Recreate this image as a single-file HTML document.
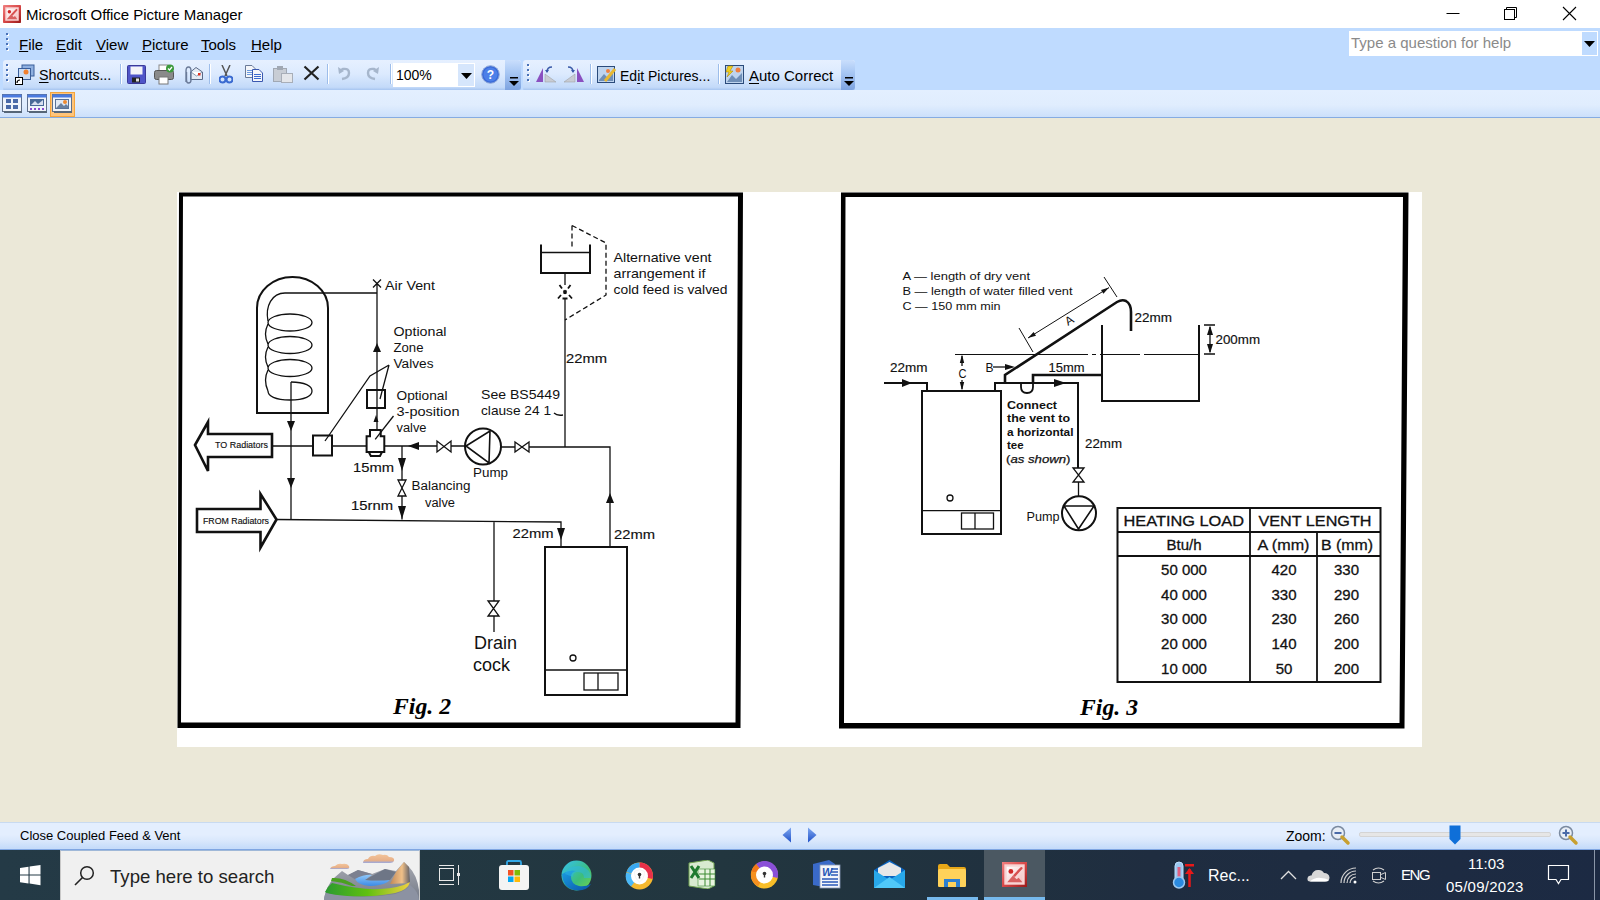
<!DOCTYPE html>
<html><head><meta charset="utf-8">
<style>
*{margin:0;padding:0;box-sizing:border-box}
html,body{width:1600px;height:900px;overflow:hidden;background:#EBE8D8;font-family:"Liberation Sans",sans-serif;position:relative}
.a{position:absolute;white-space:nowrap}
.menu{font-size:15px;color:#000;top:36px}
.menu .u{text-underline-offset:1px}
.u{text-decoration:underline;text-underline-offset:2px}
</style></head>
<body>
<div class="a" style="left:0;top:118px;width:1600px;height:704px;background:#EBE8D8"></div>
<!-- TITLE BAR -->
<div class="a" style="left:0;top:0;width:1600px;height:28px;background:#fff"></div>
<svg class="a" style="left:3px;top:5px" width="18" height="18" viewBox="0 0 24 24">
<defs><linearGradient id="pmo" x1="0" y1="0" x2="1" y2="1"><stop offset="0" stop-color="#F08080"/><stop offset="0.5" stop-color="#D84848"/><stop offset="1" stop-color="#9A1A1A"/></linearGradient>
<linearGradient id="pmi" x1="0" y1="0" x2="1" y2="1"><stop offset="0" stop-color="#FFFFFF"/><stop offset="1" stop-color="#F4C0C0"/></linearGradient></defs>
<rect x="0" y="0" width="24" height="24" rx="1" fill="url(#pmo)"/>
<rect x="3" y="3" width="18" height="18" fill="#F8D4D4"/>
<rect x="5" y="5" width="14" height="14" fill="url(#pmi)"/>
<circle cx="8.5" cy="9" r="2.3" fill="#D02828"/>
<path d="M12 13 L18 6.5" stroke="#D85050" stroke-width="2.6" stroke-linecap="round"/>
<path d="M5 19 L10.5 12.5 L14 16 L16 14.5 L19 19 Z" fill="#D86060"/>
</svg>
<div class="a" style="left:26px;top:6px;font-size:15px;color:#000;letter-spacing:-0.05px">Microsoft Office Picture Manager</div>
<svg class="a" style="left:1440px;top:0" width="160" height="28">
<line x1="6.5" y1="13.5" x2="19.5" y2="13.5" stroke="#000" stroke-width="1"/>
<rect x="64.5" y="9.5" width="10" height="10" fill="none" stroke="#000"/>
<path d="M66.5 9.5 V7.5 H76.5 V17.5 H74.5" fill="none" stroke="#000"/>
<path d="M123 7 L136 20 M136 7 L123 20" stroke="#000" stroke-width="1.1"/>
</svg>
<!-- MENU BAR -->
<div class="a" style="left:0;top:28px;width:1600px;height:31px;background:#BFDBFF"></div>
<svg class="a" style="left:6px;top:33px" width="4" height="20"><g fill="#fff"><rect x="1" y="1" width="2" height="2"/><rect x="1" y="6" width="2" height="2"/><rect x="1" y="11" width="2" height="2"/><rect x="1" y="16" width="2" height="2"/></g><g fill="#4A72B8"><rect x="0" y="0" width="2" height="2"/><rect x="0" y="5" width="2" height="2"/><rect x="0" y="10" width="2" height="2"/><rect x="0" y="15" width="2" height="2"/></g></svg>
<div class="a menu" style="left:19px"><span class="u">F</span>ile</div>
<div class="a menu" style="left:56px"><span class="u">E</span>dit</div>
<div class="a menu" style="left:96px"><span class="u">V</span>iew</div>
<div class="a menu" style="left:142px"><span class="u">P</span>icture</div>
<div class="a menu" style="left:201px"><span class="u">T</span>ools</div>
<div class="a menu" style="left:251px"><span class="u">H</span>elp</div>
<div class="a" style="left:1349px;top:31px;width:249px;height:25px;background:#fff;border:1px solid #fff"></div>
<div class="a" style="left:1582px;top:32px;width:15px;height:23px;background:#BFDBFF"></div>
<svg class="a" style="left:1583px;top:40px" width="13" height="8"><path d="M1 1 H12 L6.5 7 Z" fill="#000"/></svg>
<div class="a" style="left:1351px;top:34px;font-size:15px;color:#8A8A8A">Type a question for help</div>
<!-- TOOLBAR ROW -->
<div class="a" style="left:0;top:59px;width:1600px;height:31px;background:#BFDBFF"></div>
<div class="a" style="left:3px;top:60px;width:518px;height:31px;border-radius:3px;background:linear-gradient(#E6F0FF 0,#DCEAFE 45%,#C3DAF9 88%,#A9C7F1 96%,#8FB2E8 100%)"></div>
<div class="a" style="left:505px;top:60px;width:16px;height:30px;border-radius:0 3px 3px 0;background:linear-gradient(#C9DEFC 0,#A9C8F4 40%,#7DA3E0 100%)"></div>
<div class="a" style="left:523px;top:60px;width:332px;height:31px;border-radius:3px;background:linear-gradient(#E6F0FF 0,#DCEAFE 45%,#C3DAF9 88%,#A9C7F1 96%,#8FB2E8 100%)"></div>
<div class="a" style="left:841px;top:60px;width:14px;height:30px;border-radius:0 3px 3px 0;background:linear-gradient(#C9DEFC 0,#A9C8F4 40%,#7DA3E0 100%)"></div>
<svg class="a" style="left:507px;top:77px" width="14" height="12"><rect x="3" y="0" width="8" height="1.5" fill="#000"/><path d="M2 4 H12 L7 9 Z" fill="#000"/></svg>
<svg class="a" style="left:842px;top:77px" width="14" height="12"><rect x="3" y="0" width="8" height="1.5" fill="#000"/><path d="M2 4 H12 L7 9 Z" fill="#000"/></svg>
<svg class="a" style="left:6px;top:64px" width="4" height="20"><g fill="#fff"><rect x="1" y="1" width="2" height="2"/><rect x="1" y="6" width="2" height="2"/><rect x="1" y="11" width="2" height="2"/><rect x="1" y="16" width="2" height="2"/></g><g fill="#4A72B8"><rect x="0" y="0" width="2" height="2"/><rect x="0" y="5" width="2" height="2"/><rect x="0" y="10" width="2" height="2"/><rect x="0" y="15" width="2" height="2"/></g></svg>
<svg class="a" style="left:527px;top:64px" width="4" height="20"><g fill="#fff"><rect x="1" y="1" width="2" height="2"/><rect x="1" y="6" width="2" height="2"/><rect x="1" y="11" width="2" height="2"/><rect x="1" y="16" width="2" height="2"/></g><g fill="#4A72B8"><rect x="0" y="0" width="2" height="2"/><rect x="0" y="5" width="2" height="2"/><rect x="0" y="10" width="2" height="2"/><rect x="0" y="15" width="2" height="2"/></g></svg>
<!-- separators -->
<div class="a" style="left:120px;top:64px;width:1px;height:20px;background:#9DBDEA;box-shadow:1px 0 0 #fff"></div>
<div class="a" style="left:209px;top:64px;width:1px;height:20px;background:#9DBDEA;box-shadow:1px 0 0 #fff"></div>
<div class="a" style="left:327px;top:64px;width:1px;height:20px;background:#9DBDEA;box-shadow:1px 0 0 #fff"></div>
<div class="a" style="left:390px;top:64px;width:1px;height:20px;background:#9DBDEA;box-shadow:1px 0 0 #fff"></div>
<div class="a" style="left:590px;top:64px;width:1px;height:20px;background:#9DBDEA;box-shadow:1px 0 0 #fff"></div>
<div class="a" style="left:718px;top:64px;width:1px;height:20px;background:#9DBDEA;box-shadow:1px 0 0 #fff"></div>
<!-- shortcuts icon -->
<svg class="a" style="left:15px;top:64px" width="21" height="21">
<rect x="7" y="1" width="12" height="11" fill="#8FB0E0" stroke="#3A5E9A"/>
<rect x="3.5" y="4.5" width="12" height="11" fill="#C9DCF5" stroke="#3A5E9A"/>
<circle cx="11" cy="8" r="2.5" fill="#F08030"/>
<rect x="0.5" y="13.5" width="7" height="7" fill="#fff" stroke="#000"/>
<path d="M2 19 Q2 16 5 16" stroke="#000" fill="none" stroke-width="1.2"/>
</svg>
<div class="a" style="left:39px;top:67px;font-size:14.3px;color:#000"><span class="u">S</span>hortcuts...</div>
<!-- save -->
<svg class="a" style="left:127px;top:65px" width="19" height="19"><rect x="0.5" y="0.5" width="18" height="18" rx="1" fill="#4F55C8" stroke="#3A3A9A"/><rect x="3.5" y="1.5" width="12" height="8" fill="#F4F4F8"/><rect x="5" y="12.5" width="8" height="5" fill="#222"/><rect x="9" y="13.5" width="3" height="3" fill="#ddd"/></svg>
<!-- print -->
<svg class="a" style="left:154px;top:64px" width="21" height="21"><rect x="5" y="1" width="9" height="6" fill="#fff" stroke="#888"/><rect x="0.5" y="6.5" width="19" height="9" rx="2" fill="#8A8A8A" stroke="#555"/><rect x="5" y="13" width="9" height="7" fill="#fff" stroke="#777"/><circle cx="16" cy="4.5" r="4" fill="#3C9A3C"/><path d="M14 4.5 L15.5 6 L18 3" stroke="#fff" fill="none" stroke-width="1.2"/></svg>
<!-- attach -->
<svg class="a" style="left:183px;top:64px" width="21" height="21"><path d="M7.5 8 L13 3.5 L19.5 8 V15.5 H7.5 Z" fill="#E4EAF4" stroke="#5A6A88"/><path d="M8 8 L13.5 12 L19 8" fill="#fff" stroke="#8A9AB0"/><rect x="15" y="9" width="2.5" height="2.5" fill="#E03020"/><path d="M3 18 V7 Q3 3 5.5 3 Q8 3 8 7 V16 Q8 19 5.5 19 Q3.5 19 3.5 16 V8" stroke="#6A7A98" stroke-width="1.4" fill="none"/></svg>
<!-- cut -->
<svg class="a" style="left:219px;top:65px" width="14" height="19"><path d="M3 0 L8 11 M11 0 L6 11" stroke="#555" stroke-width="1.5"/><circle cx="3.5" cy="14.5" r="3" fill="none" stroke="#3A6AD0" stroke-width="2"/><circle cx="10.5" cy="14.5" r="3" fill="none" stroke="#3A6AD0" stroke-width="2"/></svg>
<!-- copy -->
<svg class="a" style="left:245px;top:65px" width="19" height="17"><path d="M0.5 0.5 H7 L10.5 4 V12.5 H0.5 Z" fill="#F4F6FA" stroke="#6A7A98"/><path d="M2 5.5 H9 M2 7.5 H9 M2 9.5 H9" stroke="#6A9AE0"/><path d="M7.5 4.5 H14 L17.5 8 V16.5 H7.5 Z" fill="#F4F6FA" stroke="#3A58B0"/><path d="M9 9.5 H16 M9 11.5 H16 M9 13.5 H16" stroke="#3A6AD0"/></svg>
<!-- paste grey -->
<svg class="a" style="left:273px;top:65px" width="20" height="18"><rect x="0.5" y="3.5" width="13" height="13" fill="#C8CDD5" stroke="#A0A8B4"/><rect x="4" y="1" width="6" height="4" fill="#A0A8B4"/><rect x="8.5" y="8.5" width="11" height="9" fill="#E4E6EA" stroke="#A8AEB8"/></svg>
<!-- delete X -->
<svg class="a" style="left:303px;top:65px" width="17" height="16"><path d="M1.5 1.5 L15.5 14.5 M15.5 1.5 L1.5 14.5" stroke="#222" stroke-width="2.2"/></svg>
<!-- undo redo grey -->
<svg class="a" style="left:337px;top:66px" width="16" height="15"><path d="M5 13 Q12 12 12 7 Q12 2 6 3 L4 4" stroke="#A6B6CC" stroke-width="2.4" fill="none"/><path d="M1 1 L2 8 L7 5 Z" fill="#A6B6CC"/></svg>
<svg class="a" style="left:364px;top:66px" width="16" height="15"><path d="M11 13 Q4 12 4 7 Q4 2 10 3 L12 4" stroke="#A6B6CC" stroke-width="2.4" fill="none"/><path d="M15 1 L14 8 L9 5 Z" fill="#A6B6CC"/></svg>
<!-- zoom combo -->
<div class="a" style="left:393px;top:63px;width:82px;height:24px;background:#fff"></div>
<div class="a" style="left:458px;top:64px;width:16px;height:22px;background:#D6E6FC"></div>
<svg class="a" style="left:460px;top:72px" width="13" height="8"><path d="M1 1 H12 L6.5 7 Z" fill="#000"/></svg>
<div class="a" style="left:396px;top:67px;font-size:14px;color:#000">100%</div>
<svg class="a" style="left:481px;top:65px" width="19" height="19"><circle cx="9.5" cy="9.5" r="8.8" fill="#3A6AD8" stroke="#8FA8D8"/><circle cx="9.5" cy="9.5" r="7" fill="#4D80E8"/><text x="9.5" y="14" font-size="12" font-weight="bold" text-anchor="middle" fill="#fff" font-family="Liberation Sans">?</text></svg>
<!-- rotate -->
<svg class="a" style="left:535px;top:65px" width="22" height="18"><path d="M1 17 L8 3 V17 Z" fill="#8A50C0"/><path d="M10 17 H21 L10 9 Z" fill="#C8CCD4" stroke="#999" stroke-width="0.5"/><path d="M12 7 Q12 2 17 2" stroke="#3A5AA8" stroke-width="1.5" fill="none"/><path d="M10 5 L12 8 L14 5Z" fill="#3A5AA8"/></svg>
<svg class="a" style="left:563px;top:65px" width="22" height="18"><path d="M21 17 L14 3 V17 Z" fill="#8A50C0"/><path d="M12 17 H1 L12 9 Z" fill="#C8CCD4" stroke="#999" stroke-width="0.5"/><path d="M10 7 Q10 2 5 2" stroke="#3A5AA8" stroke-width="1.5" fill="none"/><path d="M8 5 L10 8 L12 5Z" fill="#3A5AA8"/></svg>
<!-- edit pictures icon -->
<svg class="a" style="left:597px;top:65px" width="20" height="19"><rect x="0.5" y="1.5" width="17" height="16" fill="#BFD4EE" stroke="#2A4A7A"/><path d="M2 15 L7 9 L11 13 L16 8 V16 H2Z" fill="#6F8FB8"/><circle cx="11" cy="6" r="2" fill="#F08040"/><path d="M8 16 L18 4" stroke="#E8B830" stroke-width="3"/></svg>
<div class="a" style="left:620px;top:68px;font-size:14px;color:#000">Ed<span class="u">i</span>t Pictures...</div>
<!-- auto correct icon -->
<svg class="a" style="left:725px;top:65px" width="19" height="19"><rect x="0.5" y="0.5" width="18" height="18" fill="#BFD4EE" stroke="#2A4A7A"/><path d="M2 17 L7 10 L11 14 L17 8 V17 H2Z" fill="#6F8FB8"/><circle cx="13" cy="5" r="2.5" fill="#F08040"/><path d="M3 1 L8 1 L5 6 L8 6 L2 12 L4 7 L1 7 Z" fill="#F0D020" stroke="#A88000" stroke-width="0.5"/></svg>
<div class="a" style="left:749px;top:67px;font-size:15px;color:#000"><span class="u">A</span>uto Correct</div>
<!-- ROW 3 -->
<div class="a" style="left:0;top:90px;width:1600px;height:28px;background:linear-gradient(#E3EFFF 0,#E0EDFE 55%,#CCE0FB 100%);border-bottom:1px solid #86ACE2"></div>
<div class="a" style="left:50px;top:92px;width:25px;height:25px;background:#FFC47A;border:1px solid #F5A53C"></div>
<svg class="a" style="left:2px;top:94px" width="21" height="19"><rect x="0.5" y="0.5" width="19" height="17" fill="#F0F4FA" stroke="#60708A"/><rect x="0.5" y="0.5" width="19" height="3" fill="#4A7AE0"/><rect x="2" y="17" width="18" height="2" fill="#566678"/><rect x="4" y="5" width="5" height="4" fill="#4A6AA8"/><rect x="11" y="5" width="5" height="4" fill="#4A6AA8"/><rect x="4" y="11" width="5" height="4" fill="#4A6AA8"/><rect x="11" y="11" width="5" height="4" fill="#4A6AA8"/></svg>
<svg class="a" style="left:27px;top:94px" width="21" height="19"><rect x="0.5" y="0.5" width="19" height="17" fill="#F0F4FA" stroke="#60708A"/><rect x="0.5" y="0.5" width="19" height="3" fill="#4A7AE0"/><rect x="2" y="17" width="18" height="2" fill="#566678"/><rect x="3" y="5" width="14" height="7" fill="#4A6A98"/><path d="M4 11 L8 7 L11 10 L16 6 V11Z" fill="#D8E0F0"/><g fill="#8A4AD0"><rect x="3" y="14" width="2" height="2"/><rect x="7" y="14" width="2" height="2"/><rect x="11" y="14" width="2" height="2"/><rect x="15" y="14" width="2" height="2"/></g></svg>
<svg class="a" style="left:52px;top:94px" width="21" height="19"><rect x="0.5" y="0.5" width="19" height="17" fill="#F0F4FA" stroke="#60708A"/><rect x="0.5" y="0.5" width="19" height="3" fill="#4A7AE0"/><rect x="2" y="17" width="18" height="2" fill="#566678"/><rect x="3" y="5" width="14" height="10" fill="#5A7298"/><rect x="4" y="6" width="12" height="8" fill="#E0E8F4"/><path d="M4 14 L9 9 L12 12 L14 10 L16 12 V14Z" fill="#6A80A0"/><circle cx="13" cy="8" r="2" fill="#F08A30"/></svg>
<!-- STATUS BAR -->
<div class="a" style="left:0;top:822px;width:1600px;height:28px;background:linear-gradient(#E3EEFE 0,#E3EEFE 45%,#D8E7FC 70%,#C6DCFA 95%);border-top:1px solid #C8DAF0;border-bottom:1px solid #7FA6E2"></div>
<div class="a" style="left:20px;top:828px;font-size:13px;color:#000">Close Coupled Feed &amp; Vent</div>
<svg class="a" style="left:782px;top:827px" width="36" height="16"><defs><linearGradient id="arg" x1="0" y1="0" x2="0" y2="1"><stop offset="0" stop-color="#7FA8F0"/><stop offset="1" stop-color="#1F50C8"/></linearGradient></defs><path d="M9 0.5 V15.5 L0.5 8 Z" fill="url(#arg)"/><path d="M26 0.5 V15.5 L34.5 8 Z" fill="url(#arg)"/></svg>
<div class="a" style="left:1286px;top:828px;font-size:14px;color:#000">Zoom:</div>
<svg class="a" style="left:1330px;top:825px" width="21" height="21"><circle cx="8" cy="8" r="6.5" fill="#E8EEF6" stroke="#7A8AA0" stroke-width="1.5"/><rect x="4.5" y="7" width="7" height="2" fill="#4A6AA8"/><path d="M12 12 L18 18" stroke="#C8A030" stroke-width="3.5" stroke-linecap="round"/></svg>
<div class="a" style="left:1359px;top:832px;width:192px;height:5px;background:#E6E6E6;border:1px solid #D4D4D4;border-radius:2px"></div>
<svg class="a" style="left:1449px;top:825px" width="12" height="20"><path d="M0.5 0.5 H11.5 V14 L6 19.5 L0.5 14 Z" fill="#0F6FD8"/></svg>
<svg class="a" style="left:1558px;top:825px" width="21" height="21"><circle cx="8" cy="8" r="6.5" fill="#E8EEF6" stroke="#7A8AA0" stroke-width="1.5"/><rect x="4.5" y="7" width="7" height="2" fill="#4A6AA8"/><rect x="7" y="4.5" width="2" height="7" fill="#4A6AA8"/><path d="M12 12 L18 18" stroke="#C8A030" stroke-width="3.5" stroke-linecap="round"/></svg>
<!-- IMAGE AREA -->
<div class="a" style="left:177px;top:192px;width:1245px;height:555px;background:#fff"></div>
<svg class="a" style="left:0;top:0" width="1600" height="900" viewBox="0 0 1600 900">
<g fill="#000" fill-rule="evenodd">
<path d="M179 192.5 L743 192.5 L740.5 728 L177.5 728 Z M183 196.5 L738 196.5 L735.5 722.5 L181 722.5 Z"/>
<path d="M841 192.5 L1408.5 192.5 L1404.5 728.5 L839 728.5 Z M845.5 197 L1403 197 L1399.5 723 L844 723 Z"/>
</g>
<g fill="none" stroke="#111" stroke-width="1.3" stroke-linecap="butt" stroke-linejoin="miter">
<!-- ============ FIG 2 ============ -->
<!-- cylinder -->
<path d="M257 413 L257 308 A35.5 31 0 0 1 328 308 L328 413 Z" stroke-width="2"/>
<!-- coil -->
<path d="M377 293 H285 C272 293 265 306 268 321"/>
<ellipse cx="290" cy="322.5" rx="22" ry="8.5"/>
<ellipse cx="290" cy="345" rx="22" ry="8.5"/>
<ellipse cx="290" cy="368" rx="22" ry="8.5"/>
<path d="M268 324 Q263 334 268 344 M268 347 Q263 357 268 367 M268 370 Q263 380 268 391"/>
<path d="M291 382 C305 382 312 386 312 391 C312 396 305 400 290 400 C275 400 268 396 268 391"/>
<path d="M291 382 V519.5"/>
<!-- air vent pipe -->
<path d="M377 283.5 V430 M373 279.5 L381 287.5 M381 279.5 L373 287.5"/>
<rect x="367" y="390" width="18" height="18" stroke-width="2"/>
<!-- leaders -->
<path d="M389 365 L380 399 M389 365 L370 376 L325 441"/>
<path d="M393.5 416 L375.2 439.3"/>
<!-- left box -->
<rect x="313" y="435.5" width="19" height="20" stroke-width="2"/>
<!-- main horizontal -->
<path d="M272 446 H313 M332 446 H366 M385 446 H437 M451 446 H465"/>
<!-- 3 position valve -->
<path d="M370 436.3 V430 H380.7 V436.3 H384.3 V452 H366.6 V436.3 Z M368.8 452 L370.8 456 H380 L382 452" stroke-width="2"/>
<!-- junction down -->
<path d="M402 446 V480 M402 496 V519.5"/>
<path d="M398 480 H406 L398 496 H406 Z"/>
<path d="M437 441 V452 L451 441 V452 Z"/>
<!-- pump -->
<circle cx="483" cy="446.5" r="18" stroke-width="2"/>
<path d="M466 446 L490 431 L489 463 Z" stroke-width="1.6"/>
<path d="M501 447 H515 M529 447 H610 V547"/>
<path d="M515 442 V452 L529 442 V452 Z"/>
<!-- cold feed -->
<path d="M565 273 V285 M565 298.5 V447"/>
<path d="M541 244.5 V273 H590 V244.5" stroke-width="2"/>
<path d="M541 252.5 H590"/>
<path d="M559.5 285 L562 288.5 M570.5 285 L568 288.5 M563.5 290.5 L566.5 293.5 M566.5 290.5 L563.5 293.5 M558 298.5 L561 295 M572 298.5 L569 295 M562.5 298.5 H567.5" stroke-width="1.8"/>
<path d="M572 225.5 V248 M572 225.5 L606 243 V295 L565 320" stroke-dasharray="5 3"/>
<path d="M554 413 Q557 416 563 415"/>
<!-- lower line -->
<path d="M276 519.5 L561 522 V547 M494 522 V601 M494 616 V632"/>
<path d="M488 601 H499 L488 616 H499 Z"/>
<!-- boiler -->
<rect x="545" y="547" width="82" height="148" stroke-width="2"/>
<path d="M545 670 H627"/>
<circle cx="573" cy="658" r="3"/>
<rect x="584" y="673" width="34" height="17"/>
<path d="M598 673 V690"/>
<!-- radiator arrows -->
<path d="M195 445 L208 422 V434 H272 V457 H208 V471 Z" stroke-width="2.6"/>
<path d="M197 509 H260.5 V494 L276.5 519.5 L260.5 547.5 V532 H197 Z" stroke-width="2.6"/>
<!-- ============ FIG 3 ============ -->
<rect x="922" y="391" width="79" height="143" stroke-width="2"/>
<path d="M922 510.7 H1001"/>
<circle cx="950" cy="498" r="3"/>
<rect x="961.5" y="513" width="32" height="16"/>
<path d="M975 513 V529"/>
<path d="M884 383 H927 V391" stroke-width="2"/>
<path d="M962 356 V366 M962 380 V389"/>
<path d="M955 354.5 H1088 M1092 354.5 H1096 M1100 354.5 H1140 M1144 354.5 H1199" stroke-width="1.1"/>
<path d="M995 391 V383 H1078 V468" stroke-width="2"/>
<path d="M1005 383 V375 L1117 302 Q1122 299 1126 301 Q1131 304 1131 312 V331" stroke-width="2.6"/>
<path d="M1021 383 V387 Q1021 393 1027 393 Q1033 393 1033 387 V383" stroke-width="1.8"/>
<path d="M1033 383 V375 H1102" stroke-width="2.6"/>
<path d="M993 367 H1008"/>
<path d="M1028 338 L1109 287.6 M1019 328 L1033 352 M1104 277 L1117 297" stroke-width="1"/>
<path d="M1102 325 V401 H1199 V325" stroke-width="2"/>
<path d="M1210 327 V352 M1204 325 H1215 M1204 354 H1215"/>
<path d="M1078.5 482 V496"/>
<path d="M1073 468 H1084 L1073 482 H1084 Z"/>
<circle cx="1079" cy="513.3" r="17" stroke-width="2"/>
<path d="M1064 506 H1094 L1078.5 529 Z" stroke-width="1.6"/>
<!-- table -->
<rect x="1117.5" y="508" width="263" height="174" stroke-width="2"/>
<path d="M1117.5 532 H1380.5 M1117.5 556 H1380.5 M1250 508 V682 M1317 532 V682" stroke-width="1.8"/>
</g>
<!-- filled arrowheads -->
<g fill="#111">
<path d="M287 421 H295 L291 431 Z M287 478 H295 L291 488 Z"/>
<path d="M373 352 H381 L377 343 Z"/>
<path d="M373.5 422 H378.5 L376 415 Z"/>
<path d="M419 442 V450 L408 446 Z"/>
<path d="M398 458 H406 L402 471 Z M398 506 H406 L402 519 Z"/>
<path d="M606 503 H614 L610 493 Z"/>
<path d="M557 528 H565 L561 540 Z"/>
<path d="M902 379 L912 383 L902 387 Z"/>
<path d="M1054 379 L1066 383 L1054 387 Z"/>
<path d="M959.8 363 H964.2 L962 354.5 Z M959.8 382 H964.2 L962 390.5 Z"/>
<path d="M1005 364 L1015 367 L1005 370 Z"/>
<path d="M1028 338 L1036 335.7 L1033.6 331.9 Z M1109 287.6 L1103.4 293.7 L1101 289.9 Z"/>
<path d="M1207 335 H1213 L1210 325.5 Z M1207 344 H1213 L1210 353.5 Z"/>
</g>
<!-- texts -->
<g font-family="Liberation Sans" fill="#111" font-size="12.5">
<text x="385" y="290" textLength="50" lengthAdjust="spacingAndGlyphs">Air Vent</text>
<text x="393.5" y="336" textLength="53" lengthAdjust="spacingAndGlyphs">Optional</text>
<text x="393.5" y="352" textLength="30" lengthAdjust="spacingAndGlyphs">Zone</text>
<text x="393.5" y="368" textLength="40" lengthAdjust="spacingAndGlyphs">Valves</text>
<text x="396.5" y="400" textLength="51" lengthAdjust="spacingAndGlyphs">Optional</text>
<text x="396.5" y="416" textLength="63" lengthAdjust="spacingAndGlyphs">3-position</text>
<text x="396.5" y="431.5" textLength="30" lengthAdjust="spacingAndGlyphs">valve</text>
<text stroke="#111" stroke-width="0.15" x="353" y="472" font-size="13" textLength="41" lengthAdjust="spacingAndGlyphs">15mm</text>
<text stroke="#111" stroke-width="0.15" x="351" y="510" font-size="13" textLength="42" lengthAdjust="spacingAndGlyphs">15rnm</text>
<text x="411.5" y="490" textLength="59" lengthAdjust="spacingAndGlyphs">Balancing</text>
<text x="425" y="507" textLength="30" lengthAdjust="spacingAndGlyphs">valve</text>
<text x="473" y="477" font-size="12" textLength="35" lengthAdjust="spacingAndGlyphs">Pump</text>
<text x="481" y="399" font-size="13" textLength="79" lengthAdjust="spacingAndGlyphs">See BS5449</text>
<text x="481" y="415" font-size="13" textLength="70" lengthAdjust="spacingAndGlyphs">clause 24 1</text>
<text stroke="#111" stroke-width="0.15" x="566" y="363" font-size="13" textLength="41" lengthAdjust="spacingAndGlyphs">22mm</text>
<text stroke="#111" stroke-width="0.15" x="512.5" y="538" font-size="13" textLength="41" lengthAdjust="spacingAndGlyphs">22mm</text>
<text stroke="#111" stroke-width="0.15" x="614" y="539" font-size="13" textLength="41" lengthAdjust="spacingAndGlyphs">22mm</text>
<text x="613.5" y="262" font-size="13" textLength="98" lengthAdjust="spacingAndGlyphs">Alternative vent</text>
<text x="613.5" y="278" font-size="13" textLength="92" lengthAdjust="spacingAndGlyphs">arrangement if</text>
<text x="613.5" y="294" font-size="13" textLength="114" lengthAdjust="spacingAndGlyphs">cold feed is valved</text>
<text x="474" y="649" font-size="17.5" textLength="43" lengthAdjust="spacingAndGlyphs">Drain</text>
<text x="473" y="671" font-size="17.5" textLength="37" lengthAdjust="spacingAndGlyphs">cock</text>
<text stroke="#111" stroke-width="0.15" x="215" y="448" font-size="9.5" textLength="53" lengthAdjust="spacingAndGlyphs">TO Radiators</text>
<text stroke="#111" stroke-width="0.15" x="203" y="524" font-size="8.8" textLength="66" lengthAdjust="spacingAndGlyphs">FROM Radiators</text>
<!-- fig 3 -->
<text x="902.5" y="279.5" font-size="11" textLength="127.5" lengthAdjust="spacingAndGlyphs">A — length of dry vent</text>
<text x="902.5" y="295" font-size="11" textLength="170" lengthAdjust="spacingAndGlyphs">B — length of water filled vent</text>
<text x="902.5" y="310" font-size="11" textLength="98" lengthAdjust="spacingAndGlyphs">C — 150 mm min</text>
<text stroke="#111" stroke-width="0.15" x="890" y="371.5" textLength="37.5" lengthAdjust="spacingAndGlyphs">22mm</text>
<text x="958.5" y="378" font-size="13" textLength="8" lengthAdjust="spacingAndGlyphs">C</text>
<text x="985.5" y="371.5" font-size="12">B</text>
<text stroke="#111" stroke-width="0.15" x="1048.5" y="371.5" textLength="36" lengthAdjust="spacingAndGlyphs">15mm</text>
<text stroke="#111" stroke-width="0.15" x="1134.5" y="321.5" textLength="37.5" lengthAdjust="spacingAndGlyphs">22mm</text>
<text stroke="#111" stroke-width="0.15" x="1215.5" y="343.5" textLength="44.5" lengthAdjust="spacingAndGlyphs">200mm</text>
<text stroke="#111" stroke-width="0.15" x="1085" y="447.5" textLength="37" lengthAdjust="spacingAndGlyphs">22mm</text>
<text x="1026.5" y="520.5" font-size="12" textLength="33" lengthAdjust="spacingAndGlyphs">Pump</text>
<text font-size="12" transform="translate(1068 326) rotate(-32)">A</text>
<g font-weight="bold" font-size="11.5" stroke="none">
<text x="1007" y="408.5" textLength="50" lengthAdjust="spacingAndGlyphs">Connect</text>
<text x="1007" y="422" textLength="63" lengthAdjust="spacingAndGlyphs">the vent to</text>
<text x="1007" y="435.5" textLength="66.5" lengthAdjust="spacingAndGlyphs">a horizontal</text>
<text x="1007" y="449">tee</text>
<text x="1006" y="462.5" font-weight="normal" stroke="#111" stroke-width="0.25" textLength="64.5" lengthAdjust="spacingAndGlyphs">(<tspan font-style="italic">as shown</tspan>)</text>
</g>
<g font-size="15" stroke="#111" stroke-width="0.3">
<text x="1123.5" y="525.5" textLength="120.5" lengthAdjust="spacingAndGlyphs">HEATING LOAD</text>
<text x="1258.5" y="525.5" textLength="113" lengthAdjust="spacingAndGlyphs">VENT LENGTH</text>
<text x="1184" y="550" text-anchor="middle">Btu/h</text>
<text x="1257.5" y="550" textLength="52" lengthAdjust="spacingAndGlyphs">A (mm)</text>
<text x="1321" y="550" textLength="52" lengthAdjust="spacingAndGlyphs">B (mm)</text>
<g text-anchor="middle">
<text x="1184" y="575">50 000</text><text x="1284" y="575">420</text><text x="1346.5" y="575">330</text>
<text x="1184" y="599.5">40 000</text><text x="1284" y="599.5">330</text><text x="1346.5" y="599.5">290</text>
<text x="1184" y="624">30 000</text><text x="1284" y="624">230</text><text x="1346.5" y="624">260</text>
<text x="1184" y="649">20 000</text><text x="1284" y="649">140</text><text x="1346.5" y="649">200</text>
<text x="1184" y="673.5">10 000</text><text x="1284" y="673.5">50</text><text x="1346.5" y="673.5">200</text>
</g>
</g>
</g>
<g font-family="Liberation Serif" font-weight="bold" font-style="italic" fill="#000">
<text x="393" y="714" font-size="24" textLength="58" lengthAdjust="spacingAndGlyphs">Fig. 2</text>
<text x="1080" y="715" font-size="23" textLength="58" lengthAdjust="spacingAndGlyphs">Fig. 3</text>
</g>
</svg>
<!-- TASKBAR -->
<div class="a" style="left:0;top:850px;width:1600px;height:50px;background:linear-gradient(90deg,#243A46 0,#22363F 45%,#20313F 62%,#1F2D40 72%,#1C2A43 100%)"></div>
<svg class="a" style="left:20px;top:865px" width="21" height="21"><path d="M0 3 L8.5 1.8 V9.6 H0 Z M9.6 1.6 L20.5 0 V9.6 H9.6 Z M0 10.6 H8.5 V18.4 L0 17.3 Z M9.6 10.6 H20.5 V20.2 L9.6 18.6 Z" fill="#fff"/></svg>
<div class="a" style="left:60px;top:850px;width:360px;height:50px;background:#F0F0F0;border-left:1px solid #C8C8C8;border-right:1px solid #C8C8C8;border-top:1px solid #9FB8D8"></div>
<svg class="a" style="left:74px;top:865px" width="22" height="21"><circle cx="13" cy="8" r="6.3" fill="none" stroke="#222" stroke-width="1.5"/><path d="M8.5 12.5 L1 20" stroke="#222" stroke-width="1.6"/></svg>
<div class="a" style="left:110px;top:866px;font-size:18.6px;color:#222">Type here to search</div>
<!-- landscape -->
<svg class="a" style="left:320px;top:850px" width="99" height="50" viewBox="0 0 99 50">
<defs>
<linearGradient id="cl" x1="0" y1="0" x2="0" y2="1"><stop offset="0" stop-color="#F2C49A"/><stop offset="0.7" stop-color="#E8B088"/><stop offset="1" stop-color="#98A8E0"/></linearGradient>
<linearGradient id="gb" x1="0" y1="0" x2="0" y2="1"><stop offset="0" stop-color="#A8AAB2"/><stop offset="1" stop-color="#747A88"/></linearGradient>
<linearGradient id="rk" x1="0" y1="0" x2="1" y2="0"><stop offset="0" stop-color="#C08858"/><stop offset="0.6" stop-color="#F0C088"/><stop offset="1" stop-color="#606068"/></linearGradient>
<linearGradient id="gr" x1="0" y1="0" x2="1" y2="0"><stop offset="0" stop-color="#2A9A30"/><stop offset="0.5" stop-color="#60C010"/><stop offset="1" stop-color="#F0D040"/></linearGradient>
<linearGradient id="lk" x1="0" y1="0" x2="0" y2="1"><stop offset="0" stop-color="#90C8F8"/><stop offset="1" stop-color="#3A8AE8"/></linearGradient>
</defs>
<path d="M43 13 Q43 9 48 9 Q50 5 55 6 Q58 3 63 5 Q67 4 69 7 Q75 7 74 11 Q73 13 70 13 Z" fill="url(#cl)"/>
<path d="M10 19 Q11 16 15 16 Q18 13 22 14 Q27 13 29 16 Q30 19 27 19 Z" fill="url(#cl)"/>
<path d="M4 50 Q6 36 14 28 L22 21 L28 25 L38 20 L52 24 L65 19 L76 21 L84 12 L89 17 Q97 25 99 40 V50 Z" fill="url(#gb)"/>
<path d="M28 25 L38 20 L52 24 Q44 26 36 30 Z" fill="#7C8090"/>
<path d="M35 29 Q45 24 52 25 Q47 28 46 30 Q60 31 70 29 Q68 35 50 36 Q38 35 35 29 Z" fill="url(#lk)"/>
<path d="M45 30 Q55 24 65 19 L76 22 L70 30 Q58 31 45 30 Z" fill="#6E7686"/>
<path d="M70 34 L76 22 L84 12 L89 17 L90 33 Z" fill="url(#rk)"/>
<path d="M12 28 Q24 27 36 36 L32 36 Q22 32 11 31 Z" fill="#4AA020"/>
<path d="M5 42 Q8 36 12 33 Q40 40 60 39 Q80 38 90 32 Q88 40 75 43 Q50 48 20 46 Q10 45 5 42 Z" fill="url(#gr)"/>
<path d="M4 50 Q4 45 6 43 Q40 50 75 44 Q86 41 90 35 Q99 42 99 50 Z" fill="#8C92A2"/>
</svg>
<!-- task view -->
<svg class="a" style="left:439px;top:865px" width="22" height="20"><rect x="0.5" y="3.5" width="14" height="12" fill="none" stroke="#E8E8E8"/><path d="M0 0.5 H15 M0 19.5 H15" stroke="#E8E8E8"/><path d="M19.5 0 V20" stroke="#E8E8E8"/><rect x="18" y="8" width="3" height="3" fill="#E8E8E8"/></svg>
<!-- store -->
<svg class="a" style="left:499px;top:860px" width="30" height="30"><path d="M8 6 V2.5 Q8 1 9.5 1 H20.5 Q22 1 22 2.5 V6" stroke="#32A8E8" stroke-width="1.8" fill="none"/><rect x="0" y="5" width="30" height="25" rx="3" fill="#F4F4F4"/><rect x="9" y="10" width="5.5" height="5.5" fill="#F35325"/><rect x="15.5" y="10" width="5.5" height="5.5" fill="#81BC06"/><rect x="9" y="16.5" width="5.5" height="5.5" fill="#05A6F0"/><rect x="15.5" y="16.5" width="5.5" height="5.5" fill="#FFBA08"/></svg>
<!-- edge -->
<svg class="a" style="left:561px;top:860px" width="32" height="31"><defs><linearGradient id="eg1" x1="0" y1="0" x2="1" y2="1"><stop offset="0" stop-color="#35C1F1"/><stop offset="0.6" stop-color="#3DBE7A"/><stop offset="1" stop-color="#74D44A"/></linearGradient><linearGradient id="eg2" x1="0" y1="0" x2="1" y2="1"><stop offset="0" stop-color="#1B9DE2"/><stop offset="1" stop-color="#0A55A8"/></linearGradient></defs><circle cx="15.5" cy="15.5" r="15" fill="url(#eg1)"/><path d="M1 14 Q2 30 17 30.5 Q26 30.5 30 24 Q24 27 18 26 Q10 24 10 17 Q10 12 15 11 Q8 9 1 14 Z" fill="url(#eg2)"/><path d="M12 17 Q12 12 17 12 Q23 12 23 18 H30 Q30 8 18 6 Q6 6 4 14 Z" fill="#2BB5E8" opacity="0.5"/></svg>
<!-- avast browser 1 -->
<svg class="a" style="left:625px;top:862px" width="29" height="28" viewBox="0 0 29 28"><circle cx="14.5" cy="14" r="13.5" fill="#F5B82E"/><path d="M14.5 0.5 A13.5 13.5 0 0 1 27.6 17 L14.5 14 Z" fill="#E8304A"/><path d="M1.5 10 A13.5 13.5 0 0 1 14.5 0.5 L14.5 14 Z" fill="#3AA8F0"/><path d="M1.2 10.5 A13.5 13.5 0 0 0 6 24.5 L14.5 14Z" fill="#4AB8F8"/><circle cx="14.5" cy="14" r="8.5" fill="#fff"/><path d="M14.5 7.5 L19.5 9.5 Q19.5 16.5 14.5 20 Q9.5 16.5 9.5 9.5 Z" fill="#fff" stroke="#E8E8E8" stroke-width="0.5"/><circle cx="14.5" cy="12.5" r="1.8" fill="#333"/><rect x="13.8" y="12.5" width="1.4" height="4" fill="#333"/></svg>
<!-- excel -->
<svg class="a" style="left:686px;top:860px" width="31" height="29"><path d="M3 3 L22 0 L28 3 V26 L22 29 L3 26 Z" fill="#D8EAD0" stroke="#6FA050"/><rect x="12" y="9" width="17" height="17" fill="#E8F4E0" stroke="#3A8A30" stroke-width="0.6"/><path d="M13 14 H29 M13 19 H29 M19 9 V26 M24 9 V26" stroke="#3A8A30" stroke-width="1"/><path d="M5 6 L13 18 M13 6 L5 18" stroke="#1E7A2E" stroke-width="3"/></svg>
<!-- avast browser 2 -->
<svg class="a" style="left:750px;top:861px" width="29" height="28" viewBox="0 0 29 28"><circle cx="14.5" cy="14" r="13.5" fill="#F8BE28"/><path d="M6 3 A13.5 13.5 0 0 1 27.6 17 L14.5 14 Z" fill="#8A50D8"/><path d="M1.2 10.5 A13.5 13.5 0 0 1 6 3 L14.5 14 Z" fill="#F07818"/><path d="M1.2 10.5 A13.5 13.5 0 0 0 8 25.5 L14.5 14Z" fill="#F59020"/><circle cx="14.5" cy="14" r="8.5" fill="#fff"/><circle cx="14.5" cy="12.5" r="1.8" fill="#333"/><rect x="13.8" y="12.5" width="1.4" height="4" fill="#333"/></svg>
<!-- word -->
<svg class="a" style="left:811px;top:860px" width="30" height="29"><path d="M2 4 L18 0 L24 4 V24 L18 28 L2 25 Z" fill="#3A6AC8"/><rect x="9" y="5" width="20" height="23" fill="#F4F6FA" stroke="#8A9AB8" stroke-width="0.8"/><text x="11" y="16" font-size="11" font-weight="bold" font-style="italic" fill="#2A58B8" font-family="Liberation Sans">W</text><path d="M20 9 H27 M20 12 H27 M20 15 H27 M11 19 H27 M11 22 H27 M11 25 H27" stroke="#2A58B8" stroke-width="1.4"/></svg>
<!-- mail -->
<svg class="a" style="left:874px;top:860px" width="31" height="29"><path d="M0 10 L15.5 0 L31 10 V28 H0 Z" fill="#0A64C0"/><path d="M4 8 L15.5 2 L27 8 V16 H4 Z" fill="#E8E8E8"/><path d="M0 10 L15.5 20 L31 10 V28 H0 Z" fill="#28A8EA"/><path d="M0 28 L15.5 17 L31 28 Z" fill="#50C8F8"/></svg>
<!-- folder -->
<svg class="a" style="left:938px;top:864px" width="28" height="23"><path d="M0 2 Q0 0 2 0 H9 L12 3 H26 Q28 3 28 5 V21 Q28 23 26 23 H2 Q0 23 0 21 Z" fill="#E8A818"/><rect x="0" y="5" width="28" height="18" rx="1.5" fill="#FFD25A"/><path d="M6 23 V15 H22 V23 H18 V18 H10 V23 Z" fill="#2D7FD0"/></svg>
<div class="a" style="left:927px;top:897px;width:51px;height:3px;background:#76B9ED"></div>
<!-- active pm -->
<div class="a" style="left:984px;top:850px;width:61px;height:50px;background:#4B5862"></div>
<div class="a" style="left:984px;top:897px;width:61px;height:3px;background:#76B9ED"></div>
<svg class="a" style="left:1002px;top:862px" width="25" height="25" viewBox="0 0 24 24">
<defs><linearGradient id="pmo2" x1="0" y1="0" x2="1" y2="1"><stop offset="0" stop-color="#F08080"/><stop offset="0.5" stop-color="#D84848"/><stop offset="1" stop-color="#9A1A1A"/></linearGradient>
<linearGradient id="pmi2" x1="0" y1="0" x2="1" y2="1"><stop offset="0" stop-color="#FFFFFF"/><stop offset="1" stop-color="#F4C0C0"/></linearGradient></defs>
<rect x="0" y="0" width="24" height="24" fill="url(#pmo2)"/>
<rect x="2.2" y="2.2" width="19.6" height="19.6" fill="#F8D4D4"/>
<rect x="4.5" y="4.5" width="15" height="15" fill="url(#pmi2)"/>
<circle cx="8.5" cy="9" r="2.3" fill="#D02828"/>
<path d="M12 13 L18.5 6" stroke="#D85050" stroke-width="2.4" stroke-linecap="round"/>
<path d="M5 19.5 L10.5 13 L14 16.5 L16 15 L19.5 19.5 Z" fill="#D86060"/>
</svg>
<!-- right tray -->
<svg class="a" style="left:1172px;top:861px" width="24" height="28"><rect x="3" y="1" width="8" height="20" rx="4" fill="#9CC8F0" stroke="#BFE0FF"/><rect x="5.5" y="6" width="3" height="12" fill="#E06080"/><circle cx="7" cy="21.5" r="5.5" fill="#2A8AE0" stroke="#9CC8F0" stroke-width="1.5"/><rect x="13" y="3" width="9" height="2.5" fill="#E81818"/><path d="M17.5 8 V26" stroke="#E81818" stroke-width="2.5"/><path d="M13 13 L17.5 7 L22 13 Z" fill="#E81818"/></svg>
<div class="a" style="left:1208px;top:867px;font-size:16px;color:#fff">Rec...</div>
<svg class="a" style="left:1280px;top:870px" width="17" height="10"><path d="M1 9 L8.5 1.5 L16 9" stroke="#E0E0E0" stroke-width="1.3" fill="none"/></svg>
<svg class="a" style="left:1307px;top:868px" width="23" height="14"><path d="M3 13.5 Q0 13.5 0.5 10 Q1 7 4.5 7.5 Q6 2 11 2 Q15 1.5 17 5 Q22 5 22.5 9.5 Q22.5 13.5 18 13.5 Z" fill="#D8D8D8"/><path d="M3 13.5 Q8 9 14 10 Q18 10 22 12 Q21 13.5 18 13.5 Z" fill="#fff"/></svg>
<svg class="a" style="left:1340px;top:867px" width="18" height="17"><path d="M1 16 A15 15 0 0 1 16 1 M4 16 A12 12 0 0 1 16 4 M7 16 A9 9 0 0 1 16 7 M10 16 A6 6 0 0 1 16 10" stroke="#D0D0D0" stroke-width="1.2" fill="none"/><circle cx="15" cy="15" r="1.5" fill="#fff"/></svg>
<svg class="a" style="left:1371px;top:866px" width="16" height="19"><path d="M2 4 Q7.5 0 13 4 M2 15 Q7.5 19 13 15" stroke="#D0D0D0" stroke-width="1.1" fill="none"/><rect x="1.5" y="6.5" width="8" height="7" fill="none" stroke="#D0D0D0"/><path d="M10 8.5 L14.5 6.5 V13.5 L10 11.5" fill="none" stroke="#D0D0D0"/></svg>
<div class="a" style="left:1401px;top:866px;font-size:15px;color:#fff;letter-spacing:-1.4px">ENG</div>
<div class="a" style="left:1468px;top:855px;font-size:15px;color:#fff">11:03</div>
<div class="a" style="left:1446px;top:878px;font-size:15px;color:#fff;letter-spacing:0.25px">05/09/2023</div>
<svg class="a" style="left:1547px;top:864px" width="23" height="22"><path d="M1.5 1.5 H21.5 V15.5 H14 L11.5 19.5 L9 15.5 H1.5 Z" fill="none" stroke="#fff" stroke-width="1.2"/></svg>
<div class="a" style="left:1594px;top:850px;width:1px;height:50px;background:#8A96A8"></div>
</body></html>
